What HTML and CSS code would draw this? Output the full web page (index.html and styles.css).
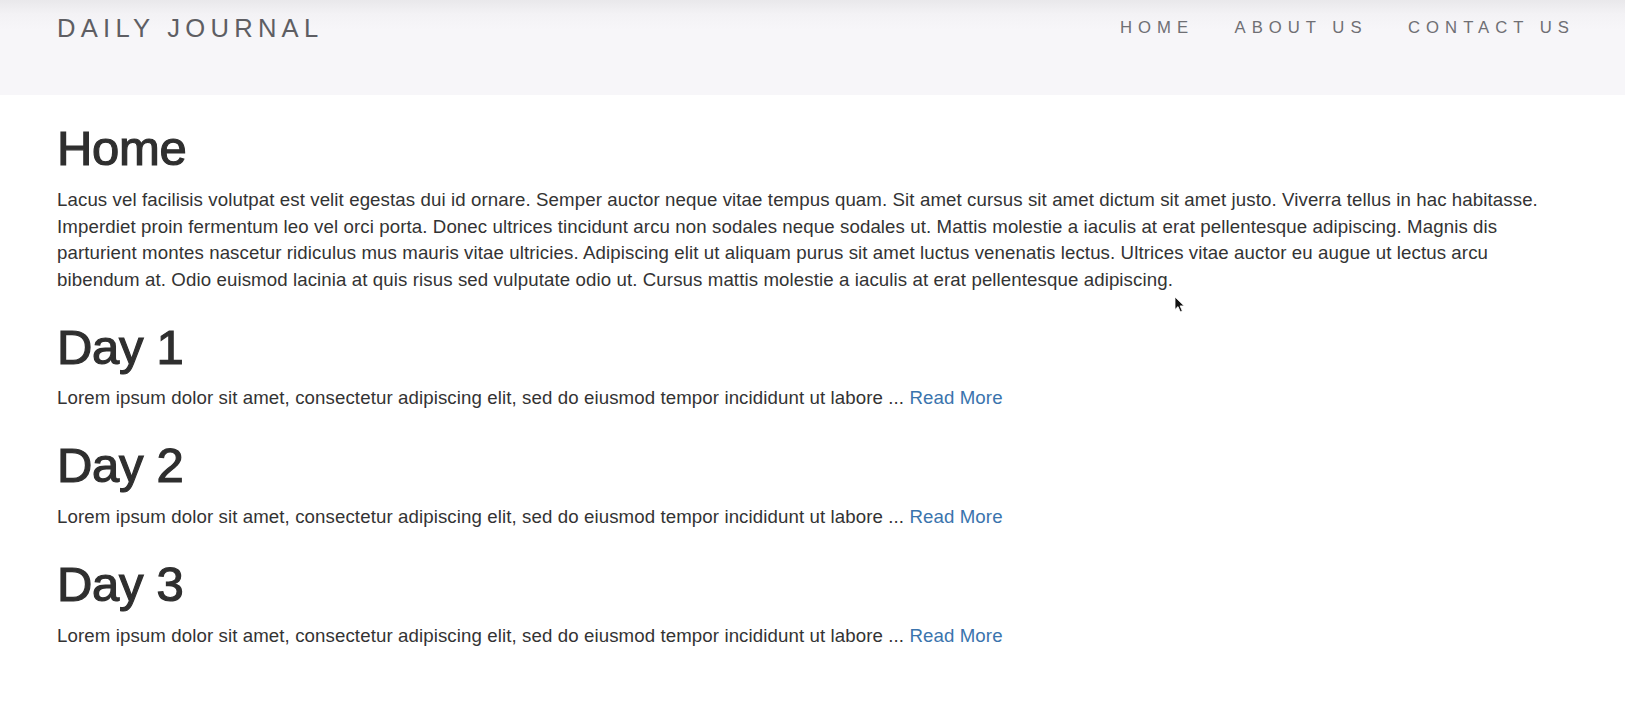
FILE: index.html
```html
<!DOCTYPE html>
<html lang="en">
<head>
<meta charset="utf-8">
<title>Daily Journal</title>
<link rel="stylesheet" href="styles.css">
</head>
<body>
<header class="site-header">
  <div class="brand">DAILY JOURNAL</div>
  <nav class="nav">
    <a class="nav-link" href="#">HOME</a>
    <a class="nav-link" href="#">ABOUT US</a>
    <a class="nav-link" href="#">CONTACT US</a>
  </nav>
</header>
<main class="content">
  <h1 class="heading">Home</h1>
  <p class="text">Lacus vel facilisis volutpat est velit egestas dui id ornare. Semper auctor neque vitae tempus quam. Sit amet cursus sit amet dictum sit amet justo. Viverra tellus in hac habitasse. Imperdiet proin fermentum leo vel orci porta. Donec ultrices tincidunt arcu non sodales neque sodales ut. Mattis molestie a iaculis at erat pellentesque adipiscing. Magnis dis parturient montes nascetur ridiculus mus mauris vitae ultricies. Adipiscing elit ut aliquam purus sit amet luctus venenatis lectus. Ultrices vitae auctor eu augue ut lectus arcu bibendum at. Odio euismod lacinia at quis risus sed vulputate odio ut. Cursus mattis molestie a iaculis at erat pellentesque adipiscing.</p>

  <h1 class="heading">Day 1</h1>
  <p class="text">Lorem ipsum dolor sit amet, consectetur adipiscing elit, sed do eiusmod tempor incididunt ut labore ... <a class="more" href="#">Read More</a></p>

  <h1 class="heading">Day 2</h1>
  <p class="text">Lorem ipsum dolor sit amet, consectetur adipiscing elit, sed do eiusmod tempor incididunt ut labore ... <a class="more" href="#">Read More</a></p>

  <h1 class="heading">Day 3</h1>
  <p class="text">Lorem ipsum dolor sit amet, consectetur adipiscing elit, sed do eiusmod tempor incididunt ut labore ... <a class="more" href="#">Read More</a></p>
</main>
<svg class="cursor" width="12" height="17" viewBox="0 0 12 17" aria-hidden="true">
  <path d="M1 1 L1 13.5 L4 10.6 L6.3 15.8 L8.3 14.9 L6.1 9.9 L10.2 9.9 Z" fill="#111" stroke="#fff" stroke-width="0.8" stroke-linejoin="round"/>
</svg>
</body>
</html>
```

FILE: styles.css
```css
html, body {
  margin: 0;
  padding: 0;
  background: #ffffff;
}

body {
  font-family: "Liberation Sans", Arial, Helvetica, sans-serif;
  color: #333333;
  position: relative;
  min-height: 724px;
}

.site-header {
  box-sizing: border-box;
  height: 95px;
  padding: 13px 50px 0 57px;
  display: flex;
  justify-content: space-between;
  align-items: flex-start;
  background: linear-gradient(to bottom, #e9e8eb 0px, #f3f2f5 14px, #f7f6f9 30px, #f7f6f9 100%);
}

.brand {
  font-size: 25.6px;
  line-height: 30px;
  letter-spacing: 5.25px;
  color: #5e5e63;
}

.nav {
  display: flex;
  gap: 40.5px;
}

.nav-link {
  font-size: 16.7px;
  line-height: 30px;
  letter-spacing: 6px;
  color: #6f6f74;
  text-decoration: none;
}

.content {
  padding: 0 57px;
}

.heading {
  font-size: 49px;
  line-height: 1.1;
  font-weight: 400;
  letter-spacing: -0.3px;
  -webkit-text-stroke: 1.2px #2f2f2f;
  color: #2f2f2f;
  margin: 27px 0 11px;
}

.text {
  font-size: 18.67px;
  line-height: 26.67px;
  letter-spacing: 0.1px;
  margin: 0;
  color: #333333;
}

.more {
  color: #3a74ad;
  text-decoration: none;
}

.cursor {
  position: absolute;
  left: 1174px;
  top: 296px;
}
```
